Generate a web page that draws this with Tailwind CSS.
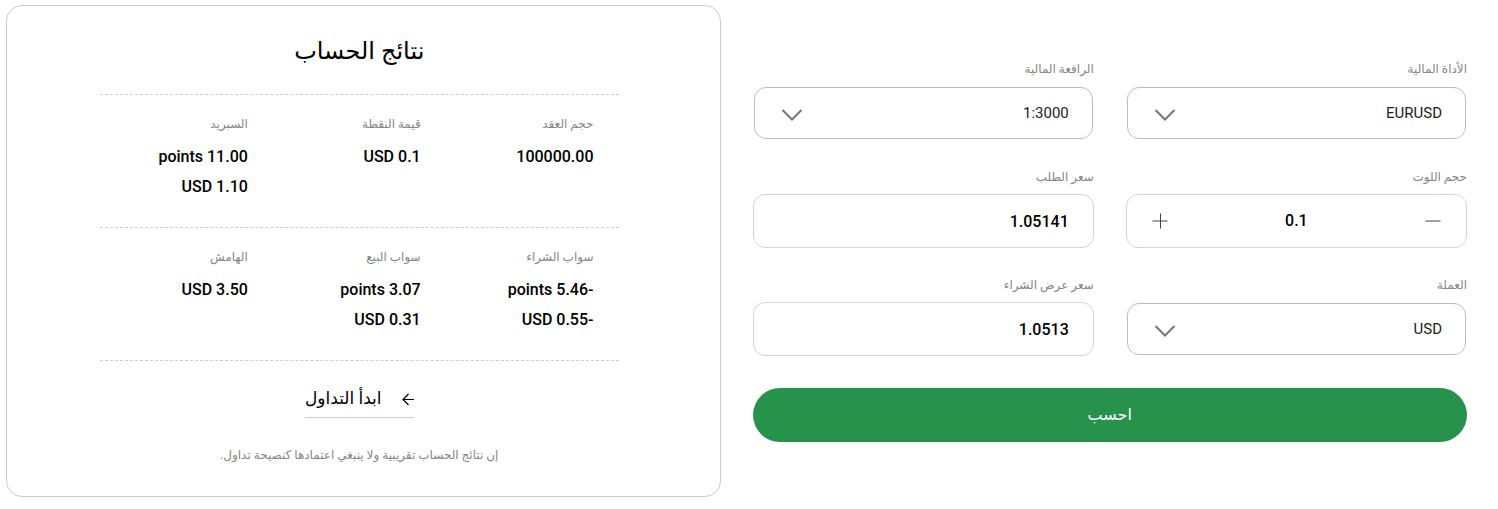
<!DOCTYPE html>
<html lang="ar" dir="rtl">
<head>
  <meta charset="UTF-8" />
  <meta name="viewport" content="width=device-width, initial-scale=1.0"/>
  <title>حاسبة التداول</title>

  <!-- Tailwind CSS -->
  <script src="https://cdn.jsdelivr.net/npm/@tailwindcss/browser@4"></script>
</head>

<body class="bg-white text-black font-['Roboto','DejaVu_Sans',sans-serif]">

  <main class="grid grid-cols-2 items-center gap-8 pt-[5px] pb-3 pr-[31px] pl-[6px]">

    <!-- Calculator form -->
    <form class="grid grid-cols-2 gap-x-8 gap-y-7" onsubmit="return false">

      <div>
        <label for="instrument" class="block mb-2 text-xs leading-[18px] text-[#858585]">الأداة المالية</label>
        <div class="relative p-px">
          <select id="instrument" class="block w-full h-[52px] px-[23px] appearance-none bg-white border border-[#bdbdbd] rounded-xl text-[15px] text-[#212121]">
            <option>EURUSD</option>
            <option>GBPUSD</option>
          </select>
          <svg class="absolute left-7 top-[23px] w-[22px] h-3 pointer-events-none" viewBox="0 0 22 12" fill="none" stroke="#757575" stroke-width="2"><path d="M1.500 1L11 10.500L20.500 1"/></svg>
        </div>
      </div>

      <div>
        <label for="leverage" class="block mb-2 text-xs leading-[18px] text-[#858585]">الرافعة المالية</label>
        <div class="relative p-px">
          <select id="leverage" class="block w-full h-[52px] px-[23px] appearance-none bg-white border border-[#bdbdbd] rounded-xl text-[15px] text-[#212121]">
            <option>1:3000</option>
            <option>1:1000</option>
          </select>
          <svg class="absolute left-7 top-[23px] w-[22px] h-3 pointer-events-none" viewBox="0 0 22 12" fill="none" stroke="#757575" stroke-width="2"><path d="M1.500 1L11 10.500L20.500 1"/></svg>
        </div>
      </div>

      <div>
        <label for="lot" class="block mb-2 text-xs leading-[18px] text-[#858585]">حجم اللوت</label>
        <div class="flex items-center h-[54px] px-[25px] border border-[#d4d4d4] rounded-xl">
          <button type="button" aria-label="إنقاص" class="w-4 h-4">
            <svg class="w-4 h-4" viewBox="0 0 16 16" fill="none" stroke="#444" stroke-width="1"><path d="M0.500 8h15"/></svg>
          </button>
          <input id="lot" type="text" inputmode="decimal" value="0.1" class="flex-1 min-w-0 text-center text-base font-medium outline-none">
          <button type="button" aria-label="زيادة" class="w-4 h-4">
            <svg class="w-4 h-4" viewBox="0 0 16 16" fill="none" stroke="#444" stroke-width="1"><path d="M0.500 8h15M8.500 0.500v15"/></svg>
          </button>
        </div>
      </div>

      <div>
        <label for="ask" class="block mb-2 text-xs leading-[18px] text-[#858585]">سعر الطلب</label>
        <input id="ask" type="text" inputmode="decimal" value="1.05141" class="block w-full h-[54px] px-6 border border-[#d4d4d4] rounded-xl text-base font-medium">
      </div>

      <div>
        <label for="currency" class="block mb-2 text-xs leading-[18px] text-[#858585]">العملة</label>
        <div class="relative p-px">
          <select id="currency" class="block w-full h-[52px] px-[23px] appearance-none bg-white border border-[#bdbdbd] rounded-xl text-[15px] text-[#212121]">
            <option>USD</option>
            <option>EUR</option>
          </select>
          <svg class="absolute left-7 top-[23px] w-[22px] h-3 pointer-events-none" viewBox="0 0 22 12" fill="none" stroke="#757575" stroke-width="2"><path d="M1.500 1L11 10.500L20.500 1"/></svg>
        </div>
      </div>

      <div>
        <label for="bid" class="block mb-2 text-xs leading-[18px] text-[#858585]">سعر عرض الشراء</label>
        <input id="bid" type="text" inputmode="decimal" value="1.0513" class="block w-full h-[54px] px-6 border border-[#d4d4d4] rounded-xl text-base font-medium">
      </div>

      <button type="submit" class="col-span-2 mt-1 h-[54px] rounded-[27px] bg-[#27924c] text-white text-base font-medium">احسب</button>
    </form>

    <!-- Results -->
    <section class="border border-[#cccccc] rounded-2xl pr-[101px] pl-[93px] pt-6 pb-[31px]">
      <h2 class="h-16 leading-[42px] text-center text-2xl font-medium">نتائج الحساب</h2>

      <dl class="grid grid-cols-3 border-t border-dashed border-[#cccccc] pt-[19px] pb-[25px]">
        <div class="pr-[25px]">
          <dt class="mb-2 text-xs leading-5 text-[#858585]">حجم العقد</dt>
          <dd class="text-base leading-[30px] font-medium">100000.00</dd>
        </div>
        <div class="pr-[25px]">
          <dt class="mb-2 text-xs leading-5 text-[#858585]">قيمة النقطة</dt>
          <dd class="flex gap-1 text-base leading-[30px] font-medium"><span>0.1</span><span>USD</span></dd>
        </div>
        <div class="pr-[25px]">
          <dt class="mb-2 text-xs leading-5 text-[#858585]">السبريد</dt>
          <dd class="flex gap-1 text-base leading-[30px] font-medium"><span>11.00</span><span>points</span></dd>
          <dd class="flex gap-1 text-base leading-[30px] font-medium"><span>1.10</span><span>USD</span></dd>
        </div>
      </dl>

      <dl class="grid grid-cols-3 border-y border-dashed border-[#cccccc] pt-[19px] pb-[25px]">
        <div class="pr-[25px]">
          <dt class="mb-2 text-xs leading-5 text-[#858585]">سواب الشراء</dt>
          <dd class="flex gap-1 text-base leading-[30px] font-medium"><span>-5.46</span><span>points</span></dd>
          <dd class="flex gap-1 text-base leading-[30px] font-medium"><span>-0.55</span><span>USD</span></dd>
        </div>
        <div class="pr-[25px]">
          <dt class="mb-2 text-xs leading-5 text-[#858585]">سواب البيع</dt>
          <dd class="flex gap-1 text-base leading-[30px] font-medium"><span>3.07</span><span>points</span></dd>
          <dd class="flex gap-1 text-base leading-[30px] font-medium"><span>0.31</span><span>USD</span></dd>
        </div>
        <div class="pr-[25px]">
          <dt class="mb-2 text-xs leading-5 text-[#858585]">الهامش</dt>
          <dd class="flex gap-1 text-base leading-[30px] font-medium"><span>3.50</span><span>USD</span></dd>
        </div>
      </dl>

      <div class="flex flex-col items-center">
        <a href="#" class="flex items-center gap-5 mt-5 h-[37px] border-b border-[#cccccc] text-[17px] font-medium">
          <svg class="w-3 h-[13px]" viewBox="0 0 12 13" fill="none" stroke="#000" stroke-width="1.200"><path d="M12 6.500H1M6.500 1L1 6.500L6.500 12"/></svg>
          ابدأ التداول
        </a>
        <p class="mt-[27px] text-xs leading-5 text-[#858585]">إن نتائج الحساب تقريبية ولا ينبغي اعتمادها كنصيحة تداول.</p>
      </div>
    </section>

  </main>

</body>
</html>
